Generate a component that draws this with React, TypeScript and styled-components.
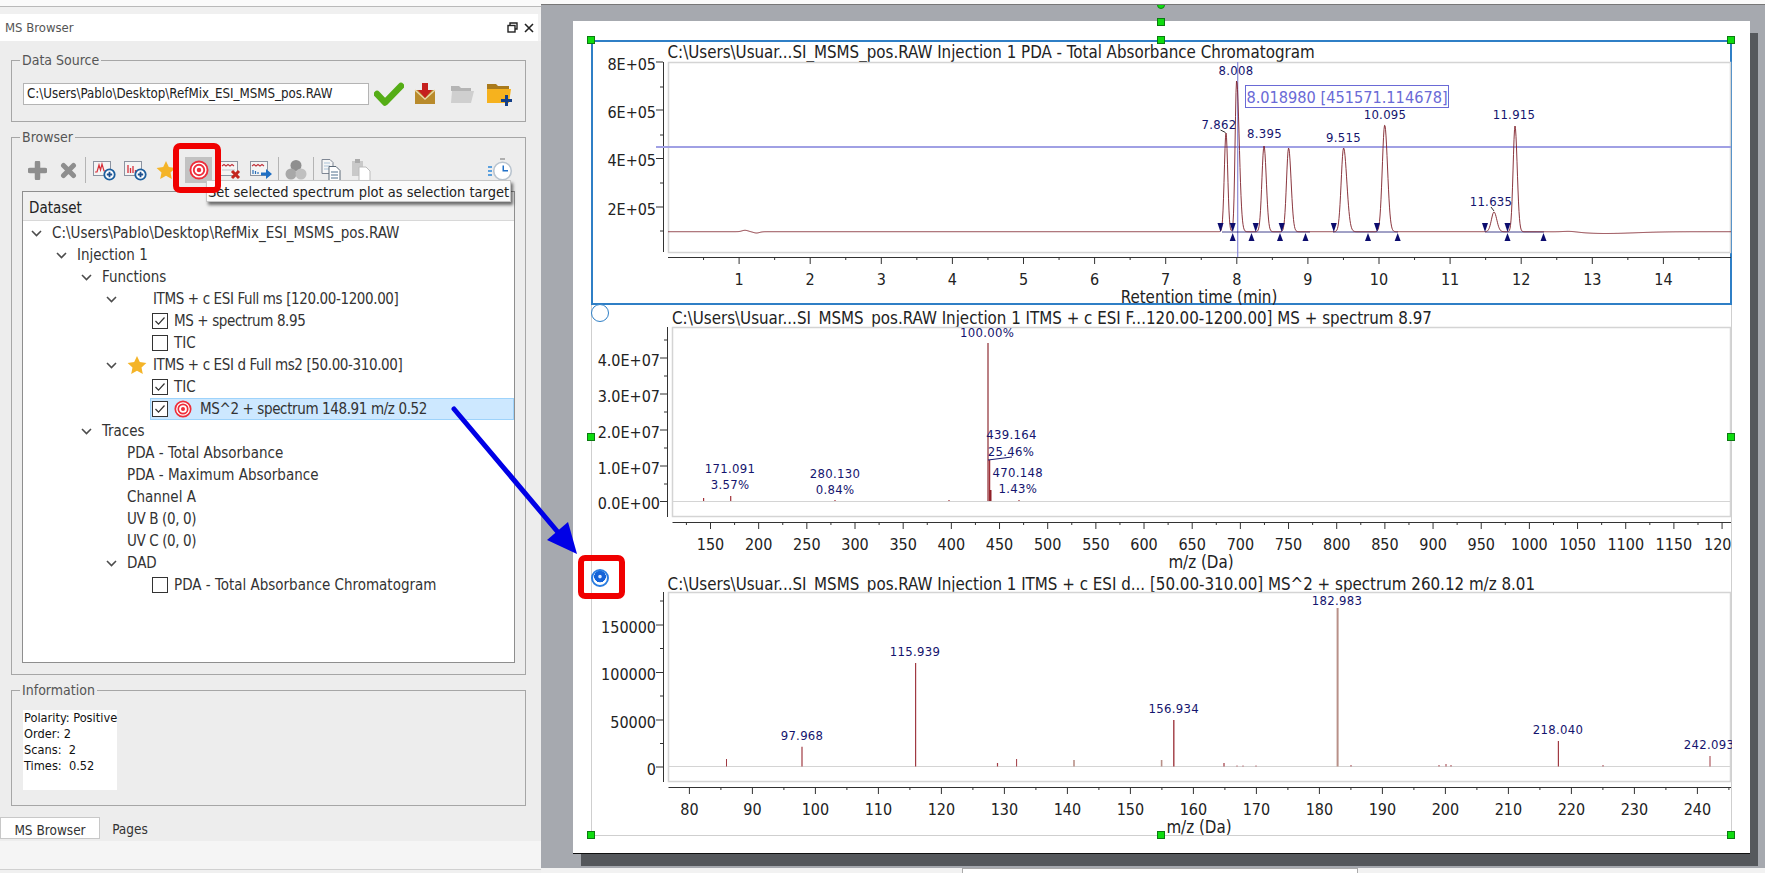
import React from "react";
import styled, { createGlobalStyle } from "styled-components";

const Global = createGlobalStyle`
  html, body { margin: 0; padding: 0; background: #f0f0f0; }
  body { font-family: "DejaVu Sans Condensed", "DejaVu Sans", "Liberation Sans", sans-serif; font-stretch: condensed; color: #222; }
`;

const Root = styled.div`
  position: relative; width: 1765px; height: 873px; display: flex; overflow: hidden; background: #f2f2f2;
`;
const Sidebar = styled.aside`
  width: 541px; flex: none; display: flex; flex-direction: column;
`;
const TopStrip = styled.div`
  height: 14px; flex: none; box-sizing: border-box; background: linear-gradient(#fafafa 0 6px, #b9b9b9 6px 7px, #f0f0f0 7px);
`;
const TitleBar = styled.div`
  height: 27px; flex: none; margin-right: 3px; padding: 0 4px 0 5px; background: #fff; display: flex; align-items: center; justify-content: space-between; font-size: 13px; color: #555;
`;
const TitleButtons = styled.div`display: flex; align-items: center; gap: 6px;`;
const SideBody = styled.div`
  height: 765px; flex: none; background: #ededed; padding: 11px 15px 0 11px; box-sizing: border-box; display: flex; flex-direction: column; gap: 7px;
`;
const Group = styled.fieldset<{ $h: number }>`
  margin: 0; padding: 0 10px; min-width: 0; height: ${(p) => p.$h}px; box-sizing: border-box; border: 1px solid #a6a6a6; display: flex; flex-direction: column;
`;
const GroupTitle = styled.legend`
  margin-left: -2px; padding: 0 2px; font-size: 14px; line-height: 16px; color: #555;
`;
const SourceRow = styled.div`display: flex; align-items: center; margin: 15px 0 0 1px; height: 22px;`;
const PathInput = styled.div`
  width: 346px; height: 22px; flex: none; box-sizing: border-box; background: #fff; border: 1px solid #b4b4b4; font-size: 13.2px; line-height: 20px; padding-left: 3px; color: #222; white-space: nowrap;
`;
const SourceIcon = styled.span<{ $w: number }>`
  width: ${(p) => p.$w}px; height: 26px; display: flex; align-items: center; justify-content: center; flex: none;
`;
const Toolbar = styled.div`display: flex; align-items: center; height: 26px; margin: 12px 0 8px; flex: none;`;
const ToolButton = styled.span<{ $w: number; $active?: boolean; $mx?: number }>`
  width: ${(p) => p.$w}px; height: 26px; flex: none; display: flex; align-items: center; justify-content: center;
  margin: 0 ${(p) => p.$mx ?? 0}px; background: ${(p) => (p.$active ? "#c2c2c2" : "transparent")};
`;
const ToolSep = styled.span<{ $mx: number }>`width: 1px; height: 26px; flex: none; background: #b4b4b4; margin: 0 ${(p) => p.$mx}px;`;
const ToolEnd = styled(ToolButton)`margin-left: auto;`;
const Tree = styled.div`flex: none; height: 472px; box-sizing: border-box; border: 1px solid #8e8e8e; background: #fff; margin-bottom: 10px;`;
const TreeHeader = styled.div`
  height: 29px; box-sizing: border-box; background: #f0f0f0; border-bottom: 1px solid #d8d8d8; padding-left: 6px; font-size: 15px; line-height: 32px; color: #222; margin-bottom: 1px;
`;
const TreeRowBox = styled.div<{ $level: number }>`
  height: 22px; display: flex; align-items: stretch; padding-left: ${(p) => p.$level * 25 + 1}px; font-size: 15px; color: #333; white-space: nowrap;
`;
const ChevSlot = styled.span`width: 24px; flex: none; display: flex; align-items: center; justify-content: center;`;
const RowContent = styled.span<{ $selected?: boolean; $tight?: boolean }>`
  flex: 1; display: flex; align-items: center; gap: 6px; padding-left: ${(p) => (p.$selected ? 1 : 3)}px; margin-left: ${(p) => (p.$selected ? 2 : 0)}px; border: 1px solid ${(p) => (p.$selected ? "#9ed3fb" : "transparent")};
  background: ${(p) => (p.$selected ? "#cde8ff" : "transparent")}; letter-spacing: ${(p) => (p.$tight ? "-.38px" : "0")};
`;
const IconSlot = styled.span`width: 20px; flex: none; display: flex; align-items: center; justify-content: center;`;
const TargetSlot = styled.span`display: flex; margin-right: 2px;`;
const Box = styled.span`
  width: 16px; height: 16px; flex: none; box-sizing: border-box; border: 1px solid #333; background: #fff; display: flex; align-items: center; justify-content: center;
`;
const InfoText = styled.div`
  width: 94px; height: 80px; margin: 12px 0 0 1px; background: #fff; font-size: 12.7px; line-height: 16px; color: #111; padding-left: 1px; box-sizing: border-box; white-space: nowrap;
`;
const TabBar = styled.div`
  height: 35px; flex: none; background: #ededed; display: flex; align-items: flex-end; padding-bottom: 2px; box-sizing: border-box; font-size: 13.5px;
`;
const Tab = styled.span<{ $on?: boolean }>`
  width: ${(p) => (p.$on ? 100 : 54)}px; height: 22px; box-sizing: border-box; text-align: center; line-height: 24px; margin-left: ${(p) => (p.$on ? 0 : 3)}px; color: #333;
  background: ${(p) => (p.$on ? "#fff" : "transparent")}; border: ${(p) => (p.$on ? "1px solid #c8c8c8" : "none")};
`;
const SideFooter = styled.div`height: 28px; flex: none; background: #f5f5f5;`;
const SideBottom = styled.div`flex: 1; background: #f0f0f0; border-top: 1px solid #d0d0d0;`;

const Main = styled.main`flex: 1; display: flex; flex-direction: column; min-width: 0;`;
const MainTop = styled.div`height: 5px; flex: none; background: #fafafa; border-bottom: 1px solid #777; box-sizing: border-box;`;
const Canvas = styled.div`height: 863px; flex: none; background: #a6a9af; padding: 16px 0 0 32px; box-sizing: border-box; overflow: hidden;`;
const MainBottom = styled.div`flex: 1; background: #f2f2f2; padding-left: 421px;`;
const StatusCell = styled.div`width: 396px; height: 100%; background: #fff; border: 1px solid #aaa; border-bottom: 0; box-sizing: border-box;`;
const Page = styled.div`
  position: relative; width: 1177px; height: 833px; box-sizing: border-box; background: #fff; padding: 19px 0 0 18px;
  box-shadow: 8px 12px 0 #55585c; border-bottom: 1px solid #111;
`;
const ChartStack = styled.div`
  width: 1141px; height: 796px; box-sizing: border-box; border: solid #cfcfcf; border-width: 0 1px 1px; display: flex; flex-direction: column;
`;
const ChartFrame = styled.section<{ $h: number; $selected?: boolean }>`
  height: ${(p) => p.$h}px; margin: 0 -1px; flex: none; box-sizing: border-box; border: 2px solid ${(p) => (p.$selected ? "#2f7fc6" : "transparent")};
  border-width: ${(p) => (p.$selected ? "2px" : "0")}; clip-path: inset(-10px 0);
  svg { display: block; overflow: visible; ${(p) => (p.$selected ? "margin: -2px;" : "")} }
`;
const Handle = styled.span<{ $x: number; $y: number }>`
  position: absolute; left: ${(p) => p.$x - 573 - 4}px; top: ${(p) => p.$y - 21 - 4}px; width: 8px; height: 8px; box-sizing: border-box; background: #0fdc0f; border: 1px solid #0c7a12; z-index: 3;
`;
const RotateHandle = styled.span`
  position: absolute; left: 584px; top: -20px; width: 8px; height: 8px; border-radius: 50%; box-sizing: border-box; background: #0fdc0f; border: 1px solid #0c8a12;
`;
const Radio = styled.span<{ $x: number; $y: number; $on?: boolean }>`
  position: absolute; left: ${(p) => p.$x - 573 - 9}px; top: ${(p) => p.$y - 21 - 9}px; width: 18px; height: 18px; box-sizing: border-box; border-radius: 50%;
  border: ${(p) => (p.$on ? "2px solid #2a7de1" : "1.5px solid #2f7fc6")}; background: ${(p) => (p.$on ? "radial-gradient(circle at 50% 40%, #dbe9ff 0 1.2px, #1463d8 2.2px 5.6px, #fff 6px)" : "#fff")}; z-index: 3;
`;
const RedBox = styled.div<{ $l: number; $t: number; $w: number; $h: number }>`
  position: absolute; left: ${(p) => p.$l}px; top: ${(p) => p.$t}px; width: ${(p) => p.$w}px; height: ${(p) => p.$h}px; box-sizing: border-box; border: 6px solid #f00000; border-radius: 7px; z-index: 6; pointer-events: none;
`;
const Tooltip = styled.div`
  position: absolute; left: 206px; top: 180px; width: 305px; height: 22px; box-sizing: border-box; background: #fbfbfb; border: 1px solid #c6c6c6; box-shadow: 2px 3px 3px rgba(0,0,0,.55);
  font-size: 14.5px; line-height: 22px; padding-left: 1px; white-space: nowrap; color: #222; z-index: 5; overflow: hidden;
`;
const ArrowLayer = styled.svg`position: absolute; inset: 0; z-index: 4; pointer-events: none;`;

const Title = styled.text`font-size: 16.8px; fill: #222;`;
const TickLabel = styled.text`font-size: 16px; fill: #222;`;
const AxisTitle = styled.text`font-size: 16.8px; fill: #222;`;
const PeakLabel = styled.text`font-size: 13px; fill: #14146e; letter-spacing: .3px;`;
const Readout = styled.text`font-size: 16.2px; fill: #6a6ad6;`;

const Chev = () => (
  <svg width="11" height="7" viewBox="0 0 11 7"><path d="M1 1l4.5 4.5L10 1" fill="none" stroke="#4c4c4c" strokeWidth="1.6" /></svg>
);
const Check = () => (
  <svg width="12" height="10" viewBox="0 0 12 10"><path d="M1.5 5l3 3.2L10.5 1.5" fill="none" stroke="#333" strokeWidth="1.2" /></svg>
);
const TargetIcon = ({ s = 18 }: { s?: number }) => (
  <svg width={s} height={s} viewBox="0 0 18 18">
    <circle cx="9" cy="9" r="7.7" fill="#fff" stroke="#ee2d3a" strokeWidth="1.7" />
    <circle cx="9" cy="9" r="4.7" fill="#fff" stroke="#ee2d3a" strokeWidth="1.7" />
    <circle cx="9" cy="9" r="2" fill="#ee2d3a" />
  </svg>
);
const StarIcon = () => (
  <svg width="20" height="20" viewBox="0 0 20 20"><path d="M10 1l2.8 6.1 6.6.8-4.9 4.5 1.3 6.6L10 15.7 4.2 19l1.3-6.6L.6 7.9l6.6-.8z" fill="#f4b428" /></svg>
);
const PlusIcon = () => (
  <svg width="19" height="19" viewBox="0 0 19 19"><path d="M9.5 2v15M2 9.5h15" stroke="#8e8e8e" strokeWidth="5.5" strokeLinecap="round" /></svg>
);
const CrossIcon = () => (
  <svg width="17" height="17" viewBox="0 0 17 17"><path d="M3.5 3.5l10 10M13.5 3.5l-10 10" stroke="#8e8e8e" strokeWidth="5" strokeLinecap="round" /></svg>
);
const PlotBox = ({ children }: { children: React.ReactNode }) => (
  <svg width="24" height="22" viewBox="0 0 24 22">
    <rect x="1.5" y="2.5" width="17" height="14" fill="#f4f4f4" stroke="#8c93a0" />
    {children}
  </svg>
);
const BluePlus = () => (
  <g>
    <circle cx="17.5" cy="15.5" r="5.2" fill="#fff" stroke="#1d5f9e" strokeWidth="1.8" />
    <path d="M14.8 15.5h5.4M17.5 12.8v5.4" stroke="#1d4f8e" strokeWidth="1.8" />
  </g>
);
const WaveAddIcon = () => (
  <PlotBox>
    <path d="M3 13h2l2-7 1.5 5L10 5l2 7h3" fill="none" stroke="#d8303a" strokeWidth="1.2" />
    <BluePlus />
  </PlotBox>
);
const BarAddIcon = () => (
  <PlotBox>
    <path d="M5 14V6M7.5 14V9M10 14V7M12.5 14v-3" stroke="#d8303a" strokeWidth="1.3" />
    <BluePlus />
  </PlotBox>
);
const WaveRemoveIcon = () => (
  <PlotBox>
    <path d="M3 7l2-1.5 2 1.5 2-1.5 2 1.5 2-1.5 2 1.5" fill="none" stroke="#c0303a" strokeWidth="1.1" />
    <path d="M3 11h13" stroke="#c0c4cc" />
    <path d="M13 12l7 7M20 12l-7 7" stroke="#c4261e" strokeWidth="3" />
  </PlotBox>
);
const WaveArrowIcon = () => (
  <PlotBox>
    <path d="M3 7l2-1.5 2 1.5 2-1.5 2 1.5 2-1.5 2 1.5" fill="none" stroke="#c0303a" strokeWidth="1.1" />
    <path d="M4 15v-4M6.5 15v-3M9 15v-2" stroke="#2a6fb8" strokeWidth="1.2" />
    <path d="M12 13.5h5V10l6 5-6 5v-3.5h-5z" fill="#1f6fc4" />
  </PlotBox>
);
const CirclesIcon = () => (
  <svg width="24" height="24" viewBox="0 0 24 24">
    <circle cx="12" cy="7.5" r="5.5" fill="#8f8f8f" />
    <circle cx="7" cy="16" r="5.5" fill="#a8a8a8" />
    <circle cx="17" cy="16" r="5.5" fill="#c0c0c0" />
  </svg>
);
const CopyIcon = () => (
  <svg width="22" height="24" viewBox="0 0 22 24">
    <path d="M2 1.5h8l3 3v11H2z" fill="#f6f6f6" stroke="#7f8794" />
    <path d="M4 5h6M4 8h6M4 11h6" stroke="#a9c2d8" />
    <path d="M9 8.5h7l4 4v10.5H9z" fill="#fff" stroke="#5c6a78" />
    <path d="M11 14h7M11 17h7M11 20h7" stroke="#51708e" strokeWidth="1.2" />
  </svg>
);
const PasteIcon = () => (
  <svg width="22" height="24" viewBox="0 0 22 24">
    <path d="M2 3h11v15H2z" fill="#c9c9c9" />
    <path d="M5 1h5v4H5z" fill="#aaa" />
    <path d="M9 9h7l4 4v10H9z" fill="#fff" stroke="#bbb" />
  </svg>
);
const ClockIcon = () => (
  <svg width="26" height="24" viewBox="0 0 26 24">
    <path d="M1 9h4M1 13h4M1 17h4" stroke="#2b86d9" strokeWidth="1.7" />
    <path d="M13 1h5" stroke="#9a9a9a" strokeWidth="1.5" />
    <circle cx="15.5" cy="13" r="8.8" fill="#fff" stroke="#b9c4cf" strokeWidth="1.6" />
    <path d="M15.5 7.5V13.5H21v-1.5h-4V7.5z" fill="#2170c8" />
  </svg>
);
const GreenCheck = () => (
  <svg width="30" height="26" viewBox="0 0 30 26"><path d="M3 13l8 8.5L27 5" fill="none" stroke="#55ad16" strokeWidth="6.5" strokeLinecap="round" strokeLinejoin="round" /></svg>
);
const TrayDown = () => (
  <svg width="24" height="24" viewBox="0 0 24 24">
    <path d="M2 8h5l5 5 5-5h5v14H2z" fill="#b98b2c" />
    <path d="M2 8l10 9 10-9" fill="none" stroke="#e8d7a8" strokeWidth="1.5" />
    <path d="M9 1h6v7h4l-7 8-7-8h4z" fill="#c5201e" />
  </svg>
);
const FolderGray = () => (
  <svg width="26" height="22" viewBox="0 0 26 22">
    <path d="M2 3h8l2 2h10v3H2z" fill="#b5b5b5" />
    <path d="M3 8h22l-3 12H2z" fill="#cfcfcf" />
  </svg>
);
const FolderAdd = () => (
  <svg width="26" height="24" viewBox="0 0 26 24">
    <path d="M1 2h9l2 2h11v4H1z" fill="#a97a1c" />
    <path d="M1 7h24l-2 14H1z" fill="#f6b21e" />
    <path d="M15 17h4v-4h3v4h4v3h-4v4h-3v-4h-4z" fill="#143f88" />
  </svg>
);
const DockIcon = () => (
  <svg width="11" height="11" viewBox="0 0 11 11">
    <path d="M3 3V1h7v6H8" fill="none" stroke="#222" strokeWidth="1.4" />
    <rect x="1" y="3.5" width="7" height="6.5" fill="#fff" stroke="#222" strokeWidth="1.4" />
  </svg>
);
const CloseIcon = () => (
  <svg width="10" height="10" viewBox="0 0 10 10"><path d="M1 1l8 8M9 1L1 9" stroke="#222" strokeWidth="1.6" /></svg>
);

type TreeRowProps = { level: number; chev?: boolean; children: React.ReactNode; selected?: boolean; tight?: boolean };
const TreeRow = ({ level, chev, children, selected, tight }: TreeRowProps) => (
  <TreeRowBox $level={level}>
    <ChevSlot>{chev && <Chev />}</ChevSlot>
    <RowContent $selected={selected} $tight={tight}>{children}</RowContent>
  </TreeRowBox>
);

const range = (a: number, b: number, s: number) => {
  const out: number[] = [];
  for (let v = a; v <= b + 1e-6; v += s) out.push(v);
  return out;
};

const AXIS = "#333";
type XAxisProps = { y: number; x0: number; majors: { x: number; label: string; ly: number }[]; minors: number[] };
const XAxis = ({ y, x0, majors, minors }: XAxisProps) => (
  <g>
    <line x1={x0} x2={1731} y1={y + 0.5} y2={y + 0.5} stroke={AXIS} strokeWidth="1" />
    {minors.map((x) => <line key={x} x1={x} x2={x} y1={y} y2={y + 3} stroke={AXIS} />)}
    {majors.map((m) => (
      <g key={m.label + m.x}>
        <line x1={m.x} x2={m.x} y1={y} y2={y + 7} stroke={AXIS} />
        <TickLabel x={m.x} y={m.ly} textAnchor="middle" dominantBaseline="central">{m.label}</TickLabel>
      </g>
    ))}
  </g>
);
type YAxisProps = { x: number; y0: number; y1: number; rightLabel: number; majors: { y: number; label: string }[]; minors: number[] };
const YAxis = ({ x, y0, y1, rightLabel, majors, minors }: YAxisProps) => (
  <g>
    <line x1={x + 0.5} x2={x + 0.5} y1={y0} y2={y1} stroke={AXIS} />
    {minors.map((v) => <line key={v} x1={x - 3} x2={x} y1={v} y2={v} stroke={AXIS} />)}
    {majors.map((m) => (
      <g key={m.label}>
        <line x1={x - 7} x2={x} y1={m.y} y2={m.y} stroke={AXIS} />
        <TickLabel x={rightLabel} y={m.y + 2} textAnchor="end" dominantBaseline="central">{m.label}</TickLabel>
      </g>
    ))}
  </g>
);
const Label = ({ x, y, t }: { x: number; y: number; t: string }) => (
  <PeakLabel x={x} y={y} textAnchor="middle" dominantBaseline="central">{t}</PeakLabel>
);

const CHROM_BASE = 231.7;
const chromPeaks: [number, number, number, number][] = [
  [1226, 98.7, 1.7, 1.7],
  [1236.6, 151, 1.5, 2.6],
  [1264, 85.7, 2.1, 2.3],
  [1288.6, 83.7, 2.1, 2.5],
  [1343.6, 83.7, 2.4, 3.2],
  [1384.7, 106.7, 2.4, 2.8],
  [1494, 19.7, 2.6, 2.8],
  [1515, 105.7, 1.9, 2.2],
  [745, 1.4, 3, 3],
  [756.5, -1.3, 3, 3],
  [1570, 0.8, 7, 7],
  [1605, -1.8, 22, 30],
];
const chromPath = (() => {
  const pts: string[] = [];
  for (let x = 668; x <= 1731; x += 0.5) {
    let h = 0;
    for (const [c, a, l, r] of chromPeaks) {
      const s = x < c ? l : r;
      h += a * Math.exp(-((x - c) ** 2) / (2 * s * s));
    }
    pts.push(`${x},${(CHROM_BASE - h).toFixed(2)}`);
  }
  return pts.join(" ");
})();
const downMarks = [1220.5, 1232.7, 1255.7, 1281.7, 1333.8, 1377, 1485, 1507.5];
const upMarks = [1232.7, 1251.5, 1280, 1305.5, 1368, 1397.7, 1507.5, 1543.5];

const Chromatogram = () => (
  <svg width="1141" height="265" viewBox="591 40 1141 265">
    <Title x={667.5} y={52} dominantBaseline="central">C:\Users\Usuar...SI_MSMS_pos.RAW Injection 1 PDA - Total Absorbance Chromatogram</Title>
    <rect x={668.5} y={62.5} width={1062} height={190} fill="#fff" stroke="#d4d4d4" strokeWidth="1.5" />
    <YAxis x={663} y0={62} y1={252} rightLabel={656}
      majors={[{ y: 62, label: "8E+05" }, { y: 110, label: "6E+05" }, { y: 158.5, label: "4E+05" }, { y: 207, label: "2E+05" }]}
      minors={[87, 135, 183, 231]} />
    <XAxis y={257} x0={668}
      majors={range(1, 14, 1).map((t) => ({ x: 668 + t * 71.1, label: String(t), ly: 279 }))}
      minors={range(0.5, 14.5, 1).map((t) => 668 + t * 71.1)} />
    <AxisTitle x={1199} y={297} textAnchor="middle" dominantBaseline="central">Retention time (min)</AxisTitle>
    <line x1={656} x2={1731} y1={147} y2={147} stroke="#a0a0e4" strokeWidth="2" />
    <line x1={1237.7} x2={1237.7} y1={62} y2={257} stroke="#8a8ad8" strokeWidth="1.2" />
    <path d="M1222 232H1310M1333 232H1398M1485 232H1544" stroke="#12126e" strokeWidth=".8" fill="none" />
    <polyline points={chromPath} fill="none" stroke="#7d1f28" strokeWidth=".9" />
    {downMarks.map((x) => <path key={x} d={`M${x - 3} 223h6l-3 9z`} fill="#0c0c6e" />)}
    {upMarks.map((x) => <path key={x} d={`M${x - 3} 241h6l-3-8z`} fill="#0c0c6e" />)}
    <path d="M1220.5 130l5 2.5M1491 207l3 4" stroke="#333" fill="none" />
    <Label x={1219} y={124} t="7.862" />
    <Label x={1236} y={70.7} t="8.008" />
    <Label x={1264.5} y={133.7} t="8.395" />
    <Label x={1343.6} y={137.7} t="9.515" />
    <Label x={1385} y={114.7} t="10.095" />
    <Label x={1491} y={201.7} t="11.635" />
    <Label x={1514} y={114.7} t="11.915" />
    <rect x={1245.5} y={85.5} width={203} height={22} fill="#fff" stroke="#6a6ad6" />
    <Readout x={1347} y={97} textAnchor="middle" dominantBaseline="central">8.018980 [451571.114678]</Readout>
  </svg>
);

const ms1x = (m: number) => 710.5 + (m - 150) * 0.9634;
const SpectrumOne = () => (
  <svg width="1141" height="265" viewBox="591 305 1141 265">
    <Title x={672} y={318} dominantBaseline="central">C:\Users\Usuar...SI_MSMS_pos.RAW Injection 1 ITMS + c ESI F...120.00-1200.00] MS + spectrum 8.97</Title>
    <rect x={672.5} y={327.5} width={1058} height={189} fill="#fff" stroke="#d4d4d4" strokeWidth="1.5" />
    <line x1={672} x2={1731} y1={501.5} y2={501.5} stroke="#d4d4d4" strokeWidth="1.2" />
    <YAxis x={667} y0={327} y1={517} rightLabel={660}
      majors={[{ y: 358, label: "4.0E+07" }, { y: 394, label: "3.0E+07" }, { y: 430, label: "2.0E+07" }, { y: 466, label: "1.0E+07" }, { y: 501.5, label: "0.0E+00" }]}
      minors={[340, 376, 412, 448, 484]} />
    <XAxis y={522} x0={672.5}
      majors={range(150, 1150, 50).map((m) => ({ x: ms1x(m), label: String(m), ly: 544 }))}
      minors={range(125, 1175, 50).map(ms1x)} />
    <line x1={ms1x(1200)} x2={ms1x(1200)} y1={522} y2={529} stroke={AXIS} />
    <TickLabel x={1704} y={544} dominantBaseline="central">120</TickLabel>
    <AxisTitle x={1201} y={561.7} textAnchor="middle" dominantBaseline="central">m/z (Da)</AxisTitle>
    <path d="M703.6 501V498M730.7 501V496M835 501V500M949 501V500M1019 501V500" stroke="#a03038" strokeWidth="1.2" fill="none" />
    <line x1={988} x2={988} y1={343} y2={501} stroke="#a4565b" strokeWidth="1.5" />
    <line x1={989.5} x2={989.5} y1={460} y2={501} stroke="#a03038" strokeWidth="1.5" />
    <line x1={990.5} x2={990.5} y1={490} y2={501} stroke="#8f2028" strokeWidth="2" />
    <line x1={988} x2={1012} y1={460} y2={457} stroke="#14146e" />
    <Label x={987} y={332} t="100.00%" />
    <Label x={1011.6} y={434.7} t="439.164" />
    <Label x={1011} y={451} t="25.46%" />
    <Label x={730} y={468.7} t="171.091" />
    <Label x={730} y={484.7} t="3.57%" />
    <Label x={835} y={473.7} t="280.130" />
    <Label x={835} y={489.7} t="0.84%" />
    <Label x={1017.8} y={472.7} t="470.148" />
    <Label x={1017.8} y={488.7} t="1.43%" />
  </svg>
);

const ms2x = (m: number) => 689.4 + (m - 80) * 6.3;
const ms2Peaks: [number, number, number][] = [
  [726.5, 759, 1], [802, 746.7, 1.2], [915.6, 663, 1.2], [997.5, 763, 1.2], [1016.6, 759, 1], [1074, 760, 1.6],
  [1161.6, 760, 1.6], [1173.8, 720, 1.4], [1224, 763, 1.2], [1337.6, 608, 2], [1558.4, 741, 1.2], [1710, 756, 1],
  [1439, 765, 1], [1446, 764, 1], [1451, 765, 1], [1351, 765, 1], [1603, 765, 1], [1237, 765.5, 1], [1243, 765.5, 1], [1256, 765.5, 1],
];
const SpectrumTwo = () => (
  <svg width="1141" height="265" viewBox="591 570 1141 265">
    <Title x={667.6} y={583.5} dominantBaseline="central">C:\Users\Usuar...SI_MSMS_pos.RAW Injection 1 ITMS + c ESI d... [50.00-310.00] MS^2 + spectrum 260.12 m/z 8.01</Title>
    <rect x={668.5} y={592.5} width={1062} height={189} fill="#fff" stroke="#d4d4d4" strokeWidth="1.5" />
    <line x1={668} x2={1731} y1={766.5} y2={766.5} stroke="#d4d4d4" strokeWidth="1.2" />
    <YAxis x={663} y0={592} y1={782} rightLabel={656}
      majors={[{ y: 625, label: "150000" }, { y: 672.5, label: "100000" }, { y: 720, label: "50000" }, { y: 767, label: "0" }]}
      minors={[601, 648.5, 696, 743.5]} />
    <XAxis y={787} x0={668.5}
      majors={range(80, 240, 10).map((m) => ({ x: ms2x(m), label: String(m), ly: 809 }))}
      minors={range(85, 245, 10).map(ms2x)} />
    <AxisTitle x={1199} y={826.7} textAnchor="middle" dominantBaseline="central">m/z (Da)</AxisTitle>
    {ms2Peaks.map(([x, top, w]) => (
      <line key={x} x1={x} x2={x} y1={top} y2={766.5} stroke={w > 1.5 ? "#b89088" : "#a03a42"} strokeWidth={w} />
    ))}
    <Label x={802} y={735.7} t="97.968" />
    <Label x={915} y={651.7} t="115.939" />
    <Label x={1173.8} y={708.7} t="156.934" />
    <Label x={1337} y={600.7} t="182.983" />
    <Label x={1558} y={729.7} t="218.040" />
    <Label x={1709} y={744.7} t="242.093" />
  </svg>
);

export default function App() {
  return (
    <Root>
      <Global />
      <Sidebar>
        <TopStrip />
        <TitleBar>
          <span>MS Browser</span>
          <TitleButtons><DockIcon /><CloseIcon /></TitleButtons>
        </TitleBar>
        <SideBody>
          <Group $h={70}>
            <GroupTitle>Data Source</GroupTitle>
            <SourceRow>
              <PathInput>C:\Users\Pablo\Desktop\RefMix_ESI_MSMS_pos.RAW</PathInput>
              <SourceIcon $w={40}><GreenCheck /></SourceIcon>
              <SourceIcon $w={32}><TrayDown /></SourceIcon>
              <SourceIcon $w={42}><FolderGray /></SourceIcon>
              <SourceIcon $w={32}><FolderAdd /></SourceIcon>
            </SourceRow>
          </Group>
          <Group $h={546}>
            <GroupTitle>Browser</GroupTitle>
            <Toolbar>
              <ToolButton $w={31}><PlusIcon /></ToolButton>
              <ToolButton $w={30}><CrossIcon /></ToolButton>
              <ToolSep $mx={2} />
              <ToolButton $w={31}><WaveAddIcon /></ToolButton>
              <ToolButton $w={31}><BarAddIcon /></ToolButton>
              <ToolButton $w={31}><StarIcon /></ToolButton>
              <ToolButton $w={27} $active $mx={4}><TargetIcon s={20} /></ToolButton>
              <ToolButton $w={30}><WaveRemoveIcon /></ToolButton>
              <ToolButton $w={30}><WaveArrowIcon /></ToolButton>
              <ToolSep $mx={2} />
              <ToolButton $w={30}><CirclesIcon /></ToolButton>
              <ToolSep $mx={2} />
              <ToolButton $w={30}><CopyIcon /></ToolButton>
              <ToolButton $w={30}><PasteIcon /></ToolButton>
              <ToolEnd $w={30}><ClockIcon /></ToolEnd>
            </Toolbar>
            <Tree>
              <TreeHeader>Dataset</TreeHeader>
              <TreeRow level={0} chev>C:\Users\Pablo\Desktop\RefMix_ESI_MSMS_pos.RAW</TreeRow>
              <TreeRow level={1} chev>Injection 1</TreeRow>
              <TreeRow level={2} chev>Functions</TreeRow>
              <TreeRow level={3} chev tight><IconSlot />ITMS + c ESI Full ms [120.00-1200.00]</TreeRow>
              <TreeRow level={4} tight><Box><Check /></Box>MS + spectrum 8.95</TreeRow>
              <TreeRow level={4}><Box />TIC</TreeRow>
              <TreeRow level={3} chev tight><IconSlot><StarIcon /></IconSlot>ITMS + c ESI d Full ms2 [50.00-310.00]</TreeRow>
              <TreeRow level={4}><Box><Check /></Box>TIC</TreeRow>
              <TreeRow level={4} selected tight><Box><Check /></Box><TargetSlot><TargetIcon /></TargetSlot>MS^2 + spectrum 148.91 m/z 0.52</TreeRow>
              <TreeRow level={2} chev>Traces</TreeRow>
              <TreeRow level={3}>PDA - Total Absorbance</TreeRow>
              <TreeRow level={3}>PDA - Maximum Absorbance</TreeRow>
              <TreeRow level={3}>Channel A</TreeRow>
              <TreeRow level={3} tight>UV B (0, 0)</TreeRow>
              <TreeRow level={3} tight>UV C (0, 0)</TreeRow>
              <TreeRow level={3} chev>DAD</TreeRow>
              <TreeRow level={4}><Box />PDA - Total Absorbance Chromatogram</TreeRow>
            </Tree>
          </Group>
          <Group $h={124}>
            <GroupTitle>Information</GroupTitle>
            <InfoText>
              Polarity: Positive<br />Order: 2<br />Scans: &nbsp;2<br />Times: &nbsp;0.52
            </InfoText>
          </Group>
        </SideBody>
        <TabBar>
          <Tab $on>MS Browser</Tab>
          <Tab>Pages</Tab>
        </TabBar>
        <SideFooter />
        <SideBottom />
      </Sidebar>
      <Main>
        <MainTop />
        <Canvas>
          <Page>
            <RotateHandle />
            <ChartStack>
              <ChartFrame $h={265} $selected><Chromatogram /></ChartFrame>
              <ChartFrame $h={265}><SpectrumOne /></ChartFrame>
              <ChartFrame $h={265}><SpectrumTwo /></ChartFrame>
            </ChartStack>
            <Handle $x={1161} $y={22} />
            <Handle $x={591} $y={40} />
            <Handle $x={1161} $y={40} />
            <Handle $x={1731} $y={40} />
            <Handle $x={591} $y={437} />
            <Handle $x={1731} $y={437} />
            <Handle $x={591} $y={835} />
            <Handle $x={1161} $y={835} />
            <Handle $x={1731} $y={835} />
            <Radio $x={600} $y={313} />
            <Radio $x={600} $y={578} $on />
          </Page>
        </Canvas>
        <MainBottom><StatusCell /></MainBottom>
      </Main>
      <Tooltip>Set selected spectrum plot as selection target</Tooltip>
      <RedBox $l={173} $t={143} $w={48} $h={50} />
      <RedBox $l={578} $t={555} $w={47} $h={44} />
      <ArrowLayer width="1765" height="873" viewBox="0 0 1765 873">
        <line x1="454" y1="409" x2="562" y2="537" stroke="#0000e6" strokeWidth="5" strokeLinecap="round" />
        <path d="M577 554L568 522 547 540z" fill="#0000e6" />
      </ArrowLayer>
    </Root>
  );
}
